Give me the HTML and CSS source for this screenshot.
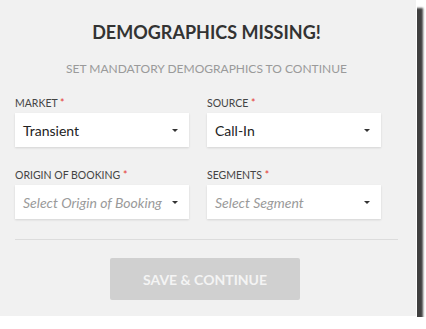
FILE: index.html
```html
<!DOCTYPE html>
<html lang="en">
<head>
  <meta charset="UTF-8">
  <title>Demographics Missing</title>
  <link rel="stylesheet" href="styles.css">
</head>
<body>

<div class="dialog">
  <h2 class="title">DEMOGRAPHICS MISSING!</h2>
  <p class="subtitle">SET MANDATORY DEMOGRAPHICS TO CONTINUE</p>

  <div class="fields">
    <div class="field">
      <label>MARKET <span class="req">*</span></label>
      <div class="select">
        <span class="value">Transient</span>
        <span class="caret"></span>
      </div>
    </div>
    <div class="field">
      <label>SOURCE <span class="req">*</span></label>
      <div class="select">
        <span class="value">Call-In</span>
        <span class="caret"></span>
      </div>
    </div>
    <div class="field">
      <label>ORIGIN OF BOOKING <span class="req">*</span></label>
      <div class="select">
        <span class="value placeholder">Select Origin of Booking</span>
        <span class="caret"></span>
      </div>
    </div>
    <div class="field">
      <label>SEGMENTS <span class="req">*</span></label>
      <div class="select">
        <span class="value placeholder">Select Segment</span>
        <span class="caret"></span>
      </div>
    </div>
  </div>

  <div class="divider"></div>

  <div class="actions">
    <button class="save" disabled>SAVE &amp; CONTINUE</button>
  </div>
</div>

</body>
</html>
```

FILE: styles.css
```css
body {
  margin: 0;
  background: #fff;
  font-family: Lato, 'Open Sans', sans-serif;
}

.dialog {
  width: 383px;
  height: 316px;
  padding: 0 18px 0 15px;
  background: #f1f1f1;
  border-right: 1px solid #fff;
  border-bottom: 1px solid #fff;
  box-shadow: 6px 8px 2px rgba(0, 0, 0, 0.75);
  box-sizing: content-box;
}

.title {
  margin: 0;
  padding-top: 21px;
  text-align: center;
  font-size: 18px;
  font-weight: 700;
  line-height: 22px;
  color: #333;
}

.subtitle {
  margin: 18px 0 0;
  text-align: center;
  font-size: 12px;
  line-height: 15px;
  color: #9a9a9a;
}

.fields {
  display: grid;
  grid-template-columns: 174px 174px;
  column-gap: 18px;
  row-gap: 21px;
  margin-top: 20px;
}

.field label {
  display: block;
  font-size: 10.5px;
  line-height: 14px;
  color: #444;
  margin-bottom: 3px;
}

.req {
  color: #e53935;
}

.select {
  display: flex;
  align-items: center;
  justify-content: space-between;
  height: 34px;
  padding: 0 9px 0 8px;
  background: #fff;
  box-shadow: 0 1px 2px rgba(0, 0, 0, 0.12);
}

.value {
  font-size: 14px;
  color: #222;
}

.value.placeholder {
  font-style: italic;
  color: #9a9a9a;
}

.caret {
  width: 0;
  height: 0;
  border-left: 3px solid transparent;
  border-right: 3px solid transparent;
  border-top: 3px solid #333;
  margin-right: 2px;
}

.divider {
  height: 1px;
  background: #dcdcdc;
  margin-top: 20px;
}

.actions {
  display: flex;
  justify-content: center;
  margin-top: 18px;
  padding-right: 3px;
}

.save {
  width: 190px;
  height: 42px;
  border: none;
  border-radius: 2px;
  background: #d0d0d0;
  color: #f4f4f4;
  font-family: inherit;
  font-size: 14px;
  font-weight: 700;
}
```
